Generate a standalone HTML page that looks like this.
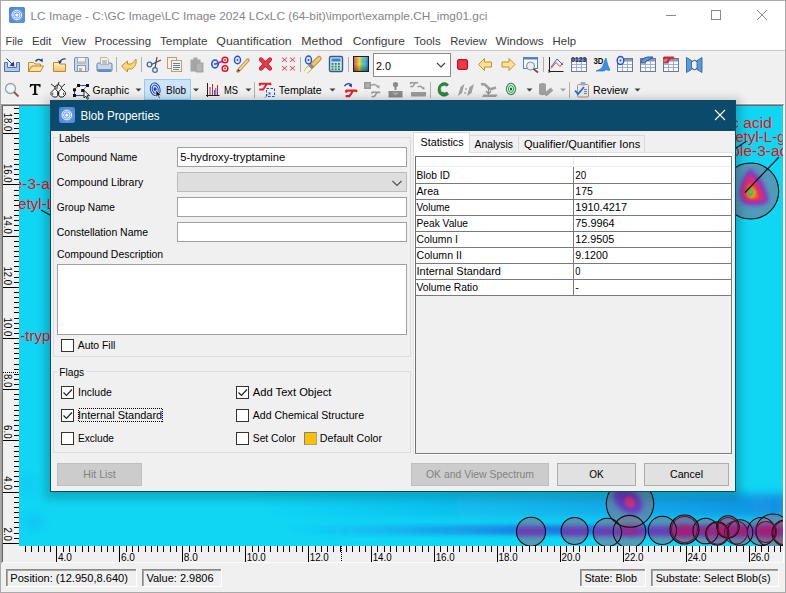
<!DOCTYPE html><html><head><meta charset="utf-8"><style>html,body{margin:0;padding:0;width:786px;height:593px;overflow:hidden;background:#f0f0f0}</style></head><body><svg width="786" height="593" viewBox="0 0 786 593" font-family='"Liberation Sans", sans-serif' style="position:absolute;left:0;top:0">
<defs>
<filter id="blur2" x="-50%" y="-50%" width="200%" height="200%"><feGaussianBlur stdDeviation="2"/></filter>
<filter id="blur4" x="-50%" y="-50%" width="200%" height="200%"><feGaussianBlur stdDeviation="4"/></filter>
<filter id="blur6" x="-50%" y="-50%" width="200%" height="200%"><feGaussianBlur stdDeviation="6"/></filter>
<filter id="shadow" x="-10%" y="-10%" width="120%" height="130%"><feGaussianBlur stdDeviation="5"/></filter>
<radialGradient id="appicon" cx="55%" cy="55%" r="65%"><stop offset="0" stop-color="#7aaaf0"/><stop offset="1" stop-color="#4a82d4"/></radialGradient>
<linearGradient id="spectrum" x1="0" x2="1" y1="0" y2="0">
<stop offset="0" stop-color="#d04a6a"/><stop offset="0.22" stop-color="#f09050"/><stop offset="0.4" stop-color="#f0e050"/><stop offset="0.58" stop-color="#70d070"/><stop offset="0.78" stop-color="#40b8f0"/><stop offset="1" stop-color="#3a50d0"/></linearGradient>
<linearGradient id="vdark" x1="0" x2="0" y1="0" y2="1"><stop offset="0" stop-color="#fff" stop-opacity="0.25"/><stop offset="0.5" stop-color="#000" stop-opacity="0"/><stop offset="1" stop-color="#000" stop-opacity="0.45"/></linearGradient>
<clipPath id="plotclip"><rect x="19" y="106" width="764" height="440"/></clipPath>
</defs>
<rect x="0" y="0" width="786" height="593" fill="#f0f0f0"/>
<rect x="0" y="0" width="786" height="50" fill="#ffffff"/>
<rect x="0.5" y="0.5" width="785" height="592" fill="none" stroke="#aaaaaa" stroke-width="1"/>
<line x1="1" y1="50.5" x2="785" y2="50.5" stroke="#c8c8c8" stroke-width="1"/>
<rect x="9" y="7" width="16" height="16" rx="2" fill="url(#appicon)"/>
<circle cx="16.8" cy="15" r="4.8" fill="none" stroke="#ffffff" stroke-width="1" opacity="0.9"/>
<circle cx="16.8" cy="15" r="3.2" fill="none" stroke="#ffffff" stroke-width="1" opacity="0.9"/>
<circle cx="16.8" cy="15" r="1.6" fill="#fff"/>
<text x="30.5" y="19.7" font-size="11.5" fill="#858585" textLength="457" lengthAdjust="spacingAndGlyphs">LC Image - C:\GC Image\LC Image 2024 LCxLC (64-bit)\import\example.CH_img01.gci</text>
<line x1="666" y1="15.5" x2="676" y2="15.5" stroke="#8a8a8a" stroke-width="1"/>
<rect x="711.5" y="10.5" width="9" height="9" fill="none" stroke="#8a8a8a" stroke-width="1"/>
<line x1="757" y1="10" x2="767" y2="20" stroke="#8a8a8a" stroke-width="1"/>
<line x1="767" y1="10" x2="757" y2="20" stroke="#8a8a8a" stroke-width="1"/>
<text x="5.5" y="44.9" font-size="11.3" fill="#3c3c3c" textLength="17.6" lengthAdjust="spacingAndGlyphs">File</text>
<text x="32" y="44.9" font-size="11.3" fill="#3c3c3c" textLength="19.5" lengthAdjust="spacingAndGlyphs">Edit</text>
<text x="61.5" y="44.9" font-size="11.3" fill="#3c3c3c" textLength="24.4" lengthAdjust="spacingAndGlyphs">View</text>
<text x="94.5" y="44.9" font-size="11.3" fill="#3c3c3c" textLength="56.5" lengthAdjust="spacingAndGlyphs">Processing</text>
<text x="160" y="44.9" font-size="11.3" fill="#3c3c3c" textLength="47.6" lengthAdjust="spacingAndGlyphs">Template</text>
<text x="216.3" y="44.9" font-size="11.3" fill="#3c3c3c" textLength="75.4" lengthAdjust="spacingAndGlyphs">Quantification</text>
<text x="301.2" y="44.9" font-size="11.3" fill="#3c3c3c" textLength="41.3" lengthAdjust="spacingAndGlyphs">Method</text>
<text x="352.7" y="44.9" font-size="11.3" fill="#3c3c3c" textLength="52.3" lengthAdjust="spacingAndGlyphs">Configure</text>
<text x="413.8" y="44.9" font-size="11.3" fill="#3c3c3c" textLength="26.9" lengthAdjust="spacingAndGlyphs">Tools</text>
<text x="450.2" y="44.9" font-size="11.3" fill="#3c3c3c" textLength="36.6" lengthAdjust="spacingAndGlyphs">Review</text>
<text x="495.4" y="44.9" font-size="11.3" fill="#3c3c3c" textLength="48.4" lengthAdjust="spacingAndGlyphs">Windows</text>
<text x="552.6" y="44.9" font-size="11.3" fill="#3c3c3c" textLength="23.4" lengthAdjust="spacingAndGlyphs">Help</text>
<path d="M4.5,62.5 h3 v5 h9 v-5 h3 v9 h-15 z" fill="#b4c8e6" stroke="#4f74ad" stroke-width="1"/>
<path d="M6.5,58.5 L12.5,64.5" stroke="#1f3f9f" stroke-width="1"/><path d="M14.5,66.5 l-5,-0.8 l4.2,-4.2 z" fill="#1f3f9f"/>
<linearGradient id="fold" x1="0" y1="0" x2="0" y2="1"><stop offset="0" stop-color="#fff0c8"/><stop offset="1" stop-color="#f0c468"/></linearGradient>
<path d="M28.5,62.5 h5 l1.5,1.5 h5.5 v7.5 h-12 z" fill="url(#fold)" stroke="#c08434"/>
<path d="M28.5,71.5 l3.5,-5.5 h11.5 l-3,5.5 z" fill="#fbe3a4" stroke="#c08434"/>
<path d="M35.5,61.5 q2.5,-3.5 5.5,-1" fill="none" stroke="#1f3f7f" stroke-width="1.3"/><path d="M42.8,62.2 l-0.3,-4 l-3,2.2z" fill="#1f3f7f"/>
<path d="M53.5,62.5 h5 l1.5,1.5 h5.5 v7.5 h-12 z" fill="url(#fold)" stroke="#c08434"/>
<path d="M59.5,62.5 q2,-4 6,-3.5" fill="none" stroke="#1f3f7f" stroke-width="1.3"/><path d="M58,60.5 l1.5,3.5 l2.5,-2.5z" fill="#1f3f7f"/>
<rect x="74.5" y="57.5" width="14" height="14" rx="1.2" fill="#c6d6ee" stroke="#6f8fc0" stroke-width="1"/>
<rect x="77.5" y="57.5" width="8" height="5.5" fill="#f4f4f0" stroke="#8aa4cc" stroke-width="0.8"/><path d="M77.5,62 h8" stroke="#e0b050" stroke-width="1"/><rect x="77.5" y="65.5" width="8" height="6" fill="#eef2f8" stroke="#6f8fc0" stroke-width="0.8"/><rect x="79" y="68" width="3" height="3" fill="#e8b040"/>
<rect x="97" y="63" width="15" height="8.5" rx="1.5" fill="#c8d6ee" stroke="#5b7fb5" stroke-width="1"/><rect x="98" y="69" width="13" height="2.5" fill="#6f8fc0"/>
<path d="M100.5,64.5 v-7 h6 l2,2 v5 z" fill="#f6f2e6" stroke="#b8a878" stroke-width="0.8"/>
<path d="M102,61 h5 M102,63 h5" stroke="#5b7fb5" stroke-width="0.8"/>
<line x1="116.5" y1="57" x2="116.5" y2="72" stroke="#b0b0b0" stroke-width="1"/>
<path d="M121.5,66 l6,-5 v3 h4 q3,-3 4.5,-5 q1,6 -3,9 l-1.5,1 h-4 v3 z" fill="#f9d77a" stroke="#c89020" stroke-width="1"/>
<line x1="141.5" y1="57" x2="141.5" y2="72" stroke="#b0b0b0" stroke-width="1"/>
<circle cx="149.5" cy="64.5" r="2.3" fill="none" stroke="#3f6fb0" stroke-width="1.3"/><circle cx="155" cy="70" r="2.3" fill="none" stroke="#3f6fb0" stroke-width="1.3"/>
<path d="M151.5,64.5 L161,60 M155,68 L157,57" stroke="#404858" stroke-width="1.2"/>
<rect x="167.5" y="57.5" width="9" height="11" fill="#f5f2e8" stroke="#b8a070"/><rect x="171.5" y="60.5" width="10" height="11" fill="#f7f4ea" stroke="#b8a070"/>
<path d="M173,63.5 h7 M173,65.5 h7 M173,67.5 h7 M173,69.5 h6" stroke="#4a6fb0" stroke-width="0.9"/>
<path d="M190.5,59.5 h3 v-2 h4 v2 h3 v12 h-10 z" fill="#a6a6a6"/><rect x="196" y="63" width="7" height="9" fill="#b4b4b4" stroke="#9a9a9a" stroke-width="0.8"/>
<ellipse cx="215" cy="64" rx="3.2" ry="4" fill="#dfe9ff" stroke="#1f4fdf" stroke-width="1.6"/><circle cx="215" cy="64" r="1" fill="#1f4fdf"/>
<path d="M216,64 L225,60" stroke="#8a2fb0" stroke-width="1.4"/>
<circle cx="225" cy="60" r="2.8" fill="#fff" stroke="#e0102a" stroke-width="1.5"/><circle cx="225" cy="68.5" r="2.8" fill="#fff" stroke="#e0102a" stroke-width="1.5"/><circle cx="225" cy="60" r="0.9" fill="#e0102a"/><circle cx="225" cy="68.5" r="0.9" fill="#e0102a"/>
<ellipse cx="237.5" cy="60" rx="3" ry="3.8" fill="#dfe9ff" stroke="#1f4fdf" stroke-width="1.4"/><circle cx="237.5" cy="60" r="0.9" fill="#1f4fdf"/>
<path d="M238,71 L248,60" stroke="#c89040" stroke-width="3.5" stroke-linecap="round"/><path d="M238,71 L248,60" stroke="#f4d9a0" stroke-width="1.8"/><path d="M237,72 l1.5,-3 l1.5,1.5z" fill="#2a3050"/>
<path d="M261,59.5 L270,68.5 M270,59.5 L261,68.5" stroke="#b01828" stroke-width="4.2" stroke-linecap="round"/><path d="M261,59.5 L270,68.5 M270,59.5 L261,68.5" stroke="#ea3a48" stroke-width="2.6" stroke-linecap="round"/>
<path d="M282,57.5 l5,4.5 m0,-4.5 l-5,4.5 M290,57.5 l5,4.5 m0,-4.5 l-5,4.5 M282,66 l5,4.5 m0,-4.5 l-5,4.5 M290,66 l5,4.5 m0,-4.5 l-5,4.5" stroke="#d82030" stroke-width="0.85"/>
<line x1="300.5" y1="57" x2="300.5" y2="72" stroke="#b0b0b0" stroke-width="1"/>
<path d="M307,70.5 L319,58.5" stroke="#a07830" stroke-width="5.2" stroke-linecap="round"/><path d="M307,70.5 L319,58.5" stroke="#f0c868" stroke-width="3.6" stroke-linecap="round"/>
<path d="M306.5,71 L310,67.5" stroke="#f8f4d8" stroke-width="4" stroke-linecap="round"/><path d="M310,67.5 L312.5,65" stroke="#8a8a8a" stroke-width="4.4"/>
<ellipse cx="308.5" cy="60" rx="3" ry="4" fill="#dfe9ff" stroke="#1f4fdf" stroke-width="1.4"/><circle cx="308.5" cy="60" r="1" fill="#1f4fdf"/>
<rect x="329.5" y="56.5" width="13" height="15" rx="1.5" fill="#cfe3f7" stroke="#2a5f90" stroke-width="1.4"/><rect x="331.5" y="58.5" width="9" height="3" fill="#3a7fd0"/>
<rect x="331.5" y="63.0" width="2" height="1.8" fill="#2a8a40"/>
<rect x="334.7" y="63.0" width="2" height="1.8" fill="#2a8a40"/>
<rect x="337.9" y="63.0" width="2" height="1.8" fill="#2a8a40"/>
<rect x="331.5" y="65.7" width="2" height="1.8" fill="#2a8a40"/>
<rect x="334.7" y="65.7" width="2" height="1.8" fill="#2a8a40"/>
<rect x="337.9" y="65.7" width="2" height="1.8" fill="#2a8a40"/>
<rect x="331.5" y="68.4" width="2" height="1.8" fill="#2a8a40"/>
<rect x="334.7" y="68.4" width="2" height="1.8" fill="#2a8a40"/>
<rect x="337.9" y="68.4" width="2" height="1.8" fill="#2a8a40"/>
<line x1="348.5" y1="57" x2="348.5" y2="72" stroke="#b0b0b0" stroke-width="1"/>
<rect x="353" y="56" width="16" height="16" fill="url(#spectrum)"/><rect x="353" y="56" width="16" height="16" fill="url(#vdark)"/><rect x="353.5" y="56.5" width="15" height="15" fill="none" stroke="#202020"/>
<rect x="373.5" y="53.5" width="77" height="23" fill="#ffffff" stroke="#8a8a8a" stroke-width="1"/>
<text x="376" y="69.5" font-size="11.5" fill="#000" textLength="15" lengthAdjust="spacingAndGlyphs">2.0</text>
<path d="M437,63 l4,4 l4,-4" fill="none" stroke="#404040" stroke-width="1.1"/>
<rect x="457.5" y="59.5" width="10" height="10" rx="1.5" fill="#e8283a" stroke="#c01828"/><rect x="459" y="61" width="7" height="7" fill="#ee3a48"/>
<path d="M478.5,64.5 l6,-6 v3.5 h7 v5 h-7 v3.5 z" fill="#fbe29a" stroke="#c89020"/>
<path d="M515,64.5 l-6,-6 v3.5 h-7 v5 h7 v3.5 z" fill="#fbe29a" stroke="#c89020"/>
<rect x="523.5" y="57.5" width="14" height="11" fill="#f4f8ff" stroke="#5a82b8"/><rect x="523.5" y="57.5" width="14" height="2" fill="#5a82b8"/>
<circle cx="530.5" cy="66" r="4" fill="#e8eef4" stroke="#808a98" stroke-width="1"/><path d="M533.5,69 L538,72.5" stroke="#7a4a3a" stroke-width="1.6"/>
<line x1="543.5" y1="57" x2="543.5" y2="72" stroke="#b0b0b0" stroke-width="1"/>
<path d="M549.5,57 v14.5 h14" fill="none" stroke="#202020" stroke-width="1"/><path d="M548,70 l3,2 M548,72 h2" stroke="#202020" stroke-width="0.8"/>
<path d="M551,68.5 l5,-6 l4,4 l3,-4" fill="none" stroke="#e02a2a" stroke-width="0.9"/><path d="M551,67 l6,-8 l6,6" fill="none" stroke="#3050d0" stroke-width="0.9"/>
<rect x="571.5" y="58.5" width="15" height="13" fill="#f6f8fc" stroke="#6a7898"/>
<rect x="572" y="59" width="14" height="2.5" fill="#8a98b8"/>
<path d="M572,64.5 h14 M572,67.5 h14 M576.5,61 v10 M581.5,61 v10" stroke="#9aa8c0" stroke-width="0.9"/>
<text x="571.3" y="62" font-size="7" fill="#1a2a5a" font-weight="bold" textLength="15" lengthAdjust="spacingAndGlyphs">0123</text>
<text x="593.5" y="63.5" font-size="8.5" fill="#101010" font-weight="bold" textLength="10" lengthAdjust="spacingAndGlyphs">3D</text>
<path d="M596,71 q5,-1 7,-5 q1.5,-6 3,-8 q1.5,8 4,12 q-1,1 -4,-0.5 q-1,1.5 -3,1.5 z" fill="#3a90e0" stroke="#1a60b0" stroke-width="0.6"/><path d="M600,66 q3,-1 4,-4" stroke="#a0d0ff" stroke-width="0.8" fill="none"/>
<rect x="617.5" y="58.5" width="15" height="13" fill="#f6f8fc" stroke="#6a7898"/>
<rect x="618" y="59" width="14" height="2.5" fill="#8a98b8"/>
<path d="M618,64.5 h14 M618,67.5 h14 M622.5,61 v10 M627.5,61 v10" stroke="#9aa8c0" stroke-width="0.9"/>
<ellipse cx="620.5" cy="60.5" rx="3.3" ry="4" fill="#dfe9ff" stroke="#1f4fdf" stroke-width="1.4"/><circle cx="620.5" cy="60.5" r="1" fill="#1f4fdf"/>
<rect x="640.5" y="58.5" width="15" height="13" fill="#f6f8fc" stroke="#6a7898"/>
<rect x="641" y="59" width="14" height="2.5" fill="#8a98b8"/>
<path d="M641,64.5 h14 M641,67.5 h14 M645.5,61 v10 M650.5,61 v10" stroke="#9aa8c0" stroke-width="0.9"/>
<path d="M641,63 q0,-5 7,-6 h5 l-4,3 q-3,0 -4,3 z" fill="#6a92d0" stroke="#1f4f9f" stroke-width="0.9"/>
<rect x="663.5" y="58.5" width="15" height="13" fill="#f6f8fc" stroke="#6a7898"/>
<rect x="664" y="59" width="14" height="2.5" fill="#8a98b8"/>
<path d="M664,64.5 h14 M664,67.5 h14 M668.5,61 v10 M673.5,61 v10" stroke="#9aa8c0" stroke-width="0.9"/>
<g transform="translate(663.5,56.5) scale(0.85)"><path d="M0.5,1.2 h11 M0.8,0.5 v2.8 M10.5,0.3 l1.5,2.2 M8,1.3 l-4.2,6.2 M0.2,7 h4.3" fill="none" stroke="#e0202a" stroke-width="2.4"/></g>
<path d="M686.5,57.5 l5,3 v9 l-5,3 z M702,57.5 l-5,3 v9 l5,3 z" fill="#5a9ad8" stroke="#1f5fa0" stroke-width="0.8"/>
<path d="M692,61.5 q2.5,-2.5 5,0 M692,68.5 q2.5,2.5 5,0" fill="none" stroke="#1a2a6a" stroke-width="0.9"/>
<circle cx="10.5" cy="88.5" r="5" fill="#f0f4f8" stroke="#9aa0a8" stroke-width="1.3"/><path d="M14,92 L18.5,96.5" stroke="#8a5a4a" stroke-width="2"/>
<path d="M30,84 h10.5 v3.2 h-0.8 q-0.5,-1.8 -2.2,-1.8 h-1.3 v8.2 l1.6,0.5 v0.9 h-5.4 v-0.9 l1.6,-0.5 v-8.2 h-1.3 q-1.7,0 -2.2,1.8 h-0.8 z" fill="#111"/>
<path d="M51,84 l4,3 v2 M57,84.5 l-2,2.5 M58,84 l3.5,3 v2 M65,84 l-3.5,3 M59,82 l-2,5 v2" fill="none" stroke="#111" stroke-width="0.9"/>
<path d="M55,88.5 l-4,4 v2 l2.5,2.5 h3 l1.5,-2 v-3 z M61.5,88.5 l4,4 v2 l-2.5,2.5 h-3 l-1.5,-2 v-3 z" fill="#fff" stroke="#111" stroke-width="0.9"/>
<path d="M52.8,92.5 v2.5 M63.7,92.5 v2.5" stroke="#111" stroke-width="0.8"/><rect x="57.3" y="92.5" width="2" height="2" fill="#111"/>
<path d="M78.5,85.5 h9 M74.5,89.5 v6 h9.5" fill="none" stroke="#2050c0" stroke-width="1"/>
<path d="M74.5,89.5 l4,-4 M87.5,85.5 l-5,5" fill="none" stroke="#2050c0" stroke-width="1" stroke-dasharray="1 1"/>
<rect x="77" y="84" width="3" height="3" fill="#111"/>
<rect x="86" y="84" width="3" height="3" fill="#111"/>
<rect x="73" y="88.3" width="3" height="3" fill="#111"/>
<rect x="81.2" y="89" width="3" height="3" fill="#111"/>
<rect x="73" y="94" width="3" height="3" fill="#111"/>
<path d="M84,90.5 v7.5 l1.8,-1.8 l1.5,3 l1.2,-0.6 l-1.5,-2.9 h2.6 z" fill="#fff" stroke="#111" stroke-width="0.9"/>
<text x="92.6" y="93.8" font-size="11.3" fill="#000" textLength="36.5" lengthAdjust="spacingAndGlyphs">Graphic</text>
<path d="M135.5,88.5 h6 l-3,3 z" fill="#404040"/>
<rect x="144.5" y="79.5" width="46" height="20" fill="#cce4f7" stroke="#99c9ef" stroke-width="1"/>
<g transform="rotate(-15 155.2 89.3)"><ellipse cx="155.2" cy="89.3" rx="4.8" ry="6.4" fill="none" stroke="#1f3fd0" stroke-width="1"/><ellipse cx="155.2" cy="89.3" rx="3" ry="4.2" fill="none" stroke="#1f3fd0" stroke-width="0.9"/><ellipse cx="155.2" cy="89.3" rx="1.5" ry="2" fill="#1f3fd0"/></g>
<path d="M156,90 v7.2 l1.7,-1.6 l1.5,3 l1.1,-0.5 l-1.5,-2.9 h2.4 z" fill="#111" stroke="#fff" stroke-width="0.6"/>
<text x="166" y="93.8" font-size="11.3" fill="#000" textLength="20" lengthAdjust="spacingAndGlyphs">Blob</text>
<path d="M193,88.5 h6 l-3,3 z" fill="#404040"/>
<path d="M207.5,83 v14 M206,95.5 h13.5" fill="none" stroke="#202020"/><path d="M210,95 v-8 M212.5,95 v-11 M217.5,95 v-10" stroke="#d82030" stroke-width="1"/><path d="M214.5,95 v-5 M215.8,95 v-7" stroke="#2050d0" stroke-width="0.9"/>
<text x="224" y="93.8" font-size="11.3" fill="#000" textLength="14" lengthAdjust="spacingAndGlyphs">MS</text>
<path d="M245.5,88.5 h6 l-3,3 z" fill="#404040"/>
<line x1="254.5" y1="82" x2="254.5" y2="98" stroke="#b0b0b0" stroke-width="1"/>
<g transform="translate(259,82.5) scale(1.0)"><path d="M0.5,1.2 h11 M0.8,0.5 v2.8 M10.5,0.3 l1.5,2.2 M8,1.3 l-4.2,6.2 M0.2,7 h4.3" fill="none" stroke="#e0202a" stroke-width="2.0"/></g>
<rect x="266.5" y="88.5" width="8" height="8" fill="none" stroke="#2050c0" stroke-width="1" stroke-dasharray="2.5 1.5"/>
<path d="M265,97.5 l4,-4" stroke="#2050c0" stroke-width="1" stroke-dasharray="1 1"/><path d="M268,92.5 l2.5,0 l-0.2,2.8 z" fill="#2050c0"/>
<text x="278.7" y="93.8" font-size="11.3" fill="#000" textLength="43" lengthAdjust="spacingAndGlyphs">Template</text>
<path d="M329.5,88.5 h6 l-3,3 z" fill="#404040"/>
<path d="M344.5,86 q3,-4 7,-1" fill="none" stroke="#1f3f9f" stroke-width="1.3"/><path d="M352,87.5 l-0.5,-4 l-3,2z" fill="#1f3f9f"/>
<g transform="translate(345.5,89.5) scale(0.95)"><path d="M0.5,1.2 h11 M0.8,0.5 v2.8 M10.5,0.3 l1.5,2.2 M8,1.3 l-4.2,6.2 M0.2,7 h4.3" fill="none" stroke="#e0202a" stroke-width="2.2"/></g>
<rect x="364" y="82" width="7" height="7" fill="#9a9a9a"/><rect x="365.5" y="83.5" width="4" height="4" fill="#b0b0b0"/>
<path d="M371,85.5 q4,-2.5 7,1.5" fill="none" stroke="#9a9a9a" stroke-width="1.3"/><path d="M379.5,88.5 l-0.3,-3.5 l-2.8,1.8z" fill="#9a9a9a"/>
<g transform="translate(371.5,91.5) scale(0.7)"><path d="M0.5,1.2 h11 M0.8,0.5 v2.8 M10.5,0.3 l1.5,2.2 M8,1.3 l-4.2,6.2 M0.2,7 h4.3" fill="none" stroke="#9a9a9a" stroke-width="2.2"/></g>
<circle cx="395.5" cy="84.5" r="2.6" fill="#8a8a8a"/><path d="M394.5,86 h2 v4 h-2 z" fill="#8a8a8a"/><path d="M388.5,91 h14 v6.5 h-14 z" fill="#8a8a8a"/><path d="M392,92.5 h7 l-3.5,3 z" fill="#b0b0b0"/>
<g transform="translate(410,82) scale(0.65)"><path d="M0.5,1.2 h11 M0.8,0.5 v2.8 M10.5,0.3 l1.5,2.2 M8,1.3 l-4.2,6.2 M0.2,7 h4.3" fill="none" stroke="#9a9a9a" stroke-width="2.2"/></g>
<path d="M417.5,87 q3,-2 5.5,1.2" fill="none" stroke="#9a9a9a" stroke-width="1.3"/><path d="M424.5,90 l-0.3,-3.2 l-2.6,1.6z" fill="#9a9a9a"/>
<rect x="411" y="92" width="15" height="4.5" fill="#9a9a9a"/>
<line x1="430.5" y1="82" x2="430.5" y2="98" stroke="#b0b0b0" stroke-width="1"/>
<path d="M448.5,84.5 q-3,-3 -6.5,-1.5 q-4,2 -4,6.5 q0,5 4.5,6.5 q3,1 6,-1.5 l-1.5,-2.5 q-2,1.5 -4,0.5 q-2.5,-1.5 -2.3,-3.5 q0,-2.5 2.3,-3.5 q2,-0.8 3.8,0.8 z" fill="#2a8a3a" stroke="#1a6a2a" stroke-width="0.6"/><path d="M441.5,86.5 q-1,3 0.5,5.5" stroke="#c8f0c8" stroke-width="0.9" fill="none"/>
<path d="M458,96 l2.5,-9 l4,-3 l-2.5,9 z M467,96 l2.5,-9 l4.5,-3 l-2.5,9 z" fill="#a0a0a0"/><path d="M465,88 l2,2 M467,88 l-2,2 M464,92 l2,2 M466,92 l-2,2" stroke="#a0a0a0" stroke-width="0.7"/>
<path d="M481,84.5 q3,-1 5,1 l3,3 q2,1 4,0 l3,-1" stroke="#a0a0a0" stroke-width="2.6" fill="none"/><path d="M488.5,88 v5 M486,91 l2.5,3 l2.5,-3" stroke="#909090" stroke-width="1.2" fill="none"/><path d="M482,97 l1.5,-2.5 h14 l-1.5,2.5 z" fill="#a0a0a0"/>
<ellipse cx="511" cy="89" rx="4.6" ry="5.6" fill="none" stroke="#2a9a4a" stroke-width="1.2"/><ellipse cx="511" cy="89" rx="2.6" ry="3.4" fill="none" stroke="#2a9a4a" stroke-width="1"/><ellipse cx="511" cy="89" rx="1.2" ry="1.6" fill="#1a6a2a"/>
<path d="M526.5,88.5 h6 l-3,3 z" fill="#404040"/>
<path d="M539,84 q3.5,-2 7,0 v10 q-3.5,2.5 -7,0 z" fill="#a0a0a0"/><path d="M545,95 l7,-6" stroke="#a0a0a0" stroke-width="4"/>
<path d="M560,88.5 h6 l-3,3 z" fill="#a0a0a0"/>
<line x1="569.5" y1="82" x2="569.5" y2="98" stroke="#b0b0b0" stroke-width="1"/>
<rect x="577.5" y="84.5" width="11" height="12.5" rx="1" fill="#e6ecf6" stroke="#b89060" stroke-width="1"/><rect x="580.5" y="82" width="5" height="3.5" rx="1" fill="#a0a8b8"/>
<path d="M584,89.5 h3 M584,91.5 h3 M584,93.5 h3" stroke="#5a6070" stroke-width="0.8"/><path d="M575,90.5 l3,3.5 l6,-7" fill="none" stroke="#1f6fd8" stroke-width="1.8"/>
<text x="593" y="93.8" font-size="11.3" fill="#000" textLength="35" lengthAdjust="spacingAndGlyphs">Review</text>
<path d="M634.5,88.5 h6 l-3,3 z" fill="#404040"/>
<rect x="2" y="105" width="781" height="458" fill="#f0f0f0"/>
<line x1="1" y1="103.5" x2="785" y2="103.5" stroke="#f8f8f8" stroke-width="1"/>
<line x1="1" y1="104.5" x2="784" y2="104.5" stroke="#a0a0a0" stroke-width="1"/>
<line x1="2" y1="105.5" x2="783" y2="105.5" stroke="#696969" stroke-width="1"/>
<line x1="0.5" y1="50" x2="0.5" y2="593" stroke="#aaaaaa" stroke-width="1"/>
<line x1="1.5" y1="104" x2="1.5" y2="563" stroke="#a0a0a0" stroke-width="1"/>
<line x1="2.5" y1="105" x2="2.5" y2="562" stroke="#696969" stroke-width="1"/>
<line x1="783.5" y1="106" x2="783.5" y2="563" stroke="#ffffff" stroke-width="1"/>
<line x1="3" y1="562.5" x2="784" y2="562.5" stroke="#fafafa" stroke-width="1"/>
<g clip-path="url(#plotclip)">
<rect x="19" y="106" width="764" height="440" fill="#10d6f4"/>
<filter id="blur1" x="-50%" y="-50%" width="200%" height="200%"><feGaussianBlur stdDeviation="1.3"/></filter>
<ellipse cx="34" cy="522" rx="10" ry="8" fill="#0cb4f0" opacity="0.45" filter="url(#blur4)"/>
<ellipse cx="28" cy="485" rx="8" ry="10" fill="#0cbcf0" opacity="0.4" filter="url(#blur4)"/>
<linearGradient id="upg" x1="0" x2="1"><stop offset="0" stop-color="#0fa8e8" stop-opacity="0"/><stop offset="0.4" stop-color="#0fa0e8" stop-opacity="0.45"/><stop offset="1" stop-color="#1488e0" stop-opacity="0.9"/></linearGradient>
<rect x="250" y="494" width="540" height="24" fill="url(#upg)" filter="url(#blur4)"/>
<linearGradient id="bandg" x1="0" x2="1"><stop offset="0" stop-color="#1a8ef0" stop-opacity="0"/><stop offset="0.25" stop-color="#1a78e8" stop-opacity="0.4"/><stop offset="0.5" stop-color="#1f64e0" stop-opacity="0.8"/><stop offset="1" stop-color="#2a54dc" stop-opacity="0.95"/></linearGradient>
<rect x="280" y="525" width="510" height="10" fill="url(#bandg)" filter="url(#blur2)"/>
<clipPath id="circclip"><circle cx="750.7" cy="191" r="28"/><circle cx="630" cy="503.6" r="23.7"/><circle cx="531" cy="531.7" r="14.5"/><circle cx="574.6" cy="531" r="13.5"/><circle cx="607.4" cy="532.4" r="14.2"/><circle cx="629.5" cy="531.7" r="16.3"/><circle cx="662.4" cy="530.4" r="14.1"/><circle cx="684.5" cy="529.5" r="14.5"/><circle cx="705.7" cy="531" r="12.8"/><circle cx="717.3" cy="533.5" r="11.6"/><circle cx="728" cy="527" r="11.2"/><circle cx="740" cy="532.5" r="12.8"/><circle cx="761.4" cy="531.5" r="14"/><circle cx="773" cy="531" r="17"/><circle cx="785" cy="533" r="13"/></clipPath>
<circle cx="750.7" cy="191" r="28" fill="#7c7590" fill-opacity="0.6"/>
<circle cx="630" cy="503.6" r="23.7" fill="#7c7590" fill-opacity="0.6"/>
<circle cx="531" cy="531.7" r="14.5" fill="#7c7590" fill-opacity="0.6"/>
<circle cx="574.6" cy="531" r="13.5" fill="#7c7590" fill-opacity="0.6"/>
<circle cx="607.4" cy="532.4" r="14.2" fill="#7c7590" fill-opacity="0.6"/>
<circle cx="629.5" cy="531.7" r="16.3" fill="#7c7590" fill-opacity="0.6"/>
<circle cx="662.4" cy="530.4" r="14.1" fill="#7c7590" fill-opacity="0.6"/>
<circle cx="684.5" cy="529.5" r="14.5" fill="#7c7590" fill-opacity="0.6"/>
<circle cx="705.7" cy="531" r="12.8" fill="#7c7590" fill-opacity="0.6"/>
<circle cx="717.3" cy="533.5" r="11.6" fill="#7c7590" fill-opacity="0.6"/>
<circle cx="728" cy="527" r="11.2" fill="#7c7590" fill-opacity="0.6"/>
<circle cx="740" cy="532.5" r="12.8" fill="#7c7590" fill-opacity="0.6"/>
<circle cx="761.4" cy="531.5" r="14" fill="#7c7590" fill-opacity="0.6"/>
<circle cx="773" cy="531" r="17" fill="#7c7590" fill-opacity="0.6"/>
<circle cx="785" cy="533" r="13" fill="#7c7590" fill-opacity="0.6"/>
<g clip-path="url(#circclip)">
<rect x="510" y="527" width="280" height="9" fill="#6a34b8" opacity="0.85" filter="url(#blur2)"/>
<ellipse cx="630" cy="531" rx="10" ry="5.5" fill="#aa1f78" opacity="0.55" filter="url(#blur2)"/>
<ellipse cx="684" cy="531" rx="13" ry="5.5" fill="#aa1f78" opacity="0.9" filter="url(#blur2)"/>
<ellipse cx="705" cy="531" rx="8" ry="5.5" fill="#aa1f78" opacity="0.6" filter="url(#blur2)"/>
<ellipse cx="722" cy="531" rx="10" ry="5.5" fill="#aa1f78" opacity="0.9" filter="url(#blur2)"/>
<ellipse cx="740" cy="531" rx="9" ry="5.5" fill="#aa1f78" opacity="0.8" filter="url(#blur2)"/>
<ellipse cx="768" cy="531" rx="12" ry="5.5" fill="#aa1f78" opacity="0.95" filter="url(#blur2)"/>
<circle cx="684.5" cy="529.5" r="13" fill="#a02070" fill-opacity="0.25"/>
<circle cx="717.3" cy="533.5" r="10.8" fill="#a02070" fill-opacity="0.25"/>
<circle cx="728" cy="527.5" r="10" fill="#a02070" fill-opacity="0.25"/>
<circle cx="736" cy="532.5" r="11.5" fill="#a02070" fill-opacity="0.25"/>
<circle cx="766" cy="532" r="10.5" fill="#a02070" fill-opacity="0.25"/>
<circle cx="785" cy="533" r="12" fill="#a02070" fill-opacity="0.25"/>
</g>
<ellipse cx="628" cy="501" rx="16" ry="11" fill="#6a34c0" opacity="0.9" filter="url(#blur2)" transform="rotate(35 628 501)"/>
<ellipse cx="630" cy="502" rx="5" ry="6" fill="#d03080" opacity="0.95" filter="url(#blur1)" transform="rotate(-30 630 502)"/>
<path d="M750,168 Q766,180 769,202 Q758,208 744,204 Q738,200 740,188 Q742,176 750,168 Z" fill="#8a32c4" opacity="0.95" filter="url(#blur2)"/>
<path d="M750,174 Q762,184 765,200 Q756,204 746,201 Q741,197 742,189 Q744,180 750,174 Z" fill="#d82c78" filter="url(#blur1)"/>
<path d="M750,183 Q758,188 759,198 Q753,200 748,198 Q745,195 746,190 Q747,186 750,183 Z" fill="#e8602a" filter="url(#blur1)"/>
<ellipse cx="751.5" cy="193" rx="4" ry="5" fill="#e0b020" filter="url(#blur1)"/>
<ellipse cx="750.5" cy="192.5" rx="2.6" ry="4" fill="#40b030" filter="url(#blur1)"/>
<ellipse cx="750.5" cy="192" rx="1" ry="2" fill="#60b8d0"/>
<circle cx="750.7" cy="191" r="28" fill="none" stroke="#101010" stroke-width="1.1"/>
<circle cx="630" cy="503.6" r="23.7" fill="none" stroke="#101010" stroke-width="1.1"/>
<circle cx="531" cy="531.7" r="14.5" fill="none" stroke="#101010" stroke-width="1.1"/>
<circle cx="574.6" cy="531" r="13.5" fill="none" stroke="#101010" stroke-width="1.1"/>
<circle cx="607.4" cy="532.4" r="14.2" fill="none" stroke="#101010" stroke-width="1.1"/>
<circle cx="629.5" cy="531.7" r="16.3" fill="none" stroke="#101010" stroke-width="1.1"/>
<circle cx="662.4" cy="530.4" r="14.1" fill="none" stroke="#101010" stroke-width="1.1"/>
<circle cx="684.5" cy="529.5" r="14.5" fill="none" stroke="#101010" stroke-width="1.1"/>
<circle cx="705.7" cy="531" r="12.8" fill="none" stroke="#101010" stroke-width="1.1"/>
<circle cx="717.3" cy="533.5" r="11.6" fill="none" stroke="#101010" stroke-width="1.1"/>
<circle cx="728" cy="527" r="11.2" fill="none" stroke="#101010" stroke-width="1.1"/>
<circle cx="740" cy="532.5" r="12.8" fill="none" stroke="#101010" stroke-width="1.1"/>
<circle cx="761.4" cy="531.5" r="14" fill="none" stroke="#101010" stroke-width="1.1"/>
<circle cx="773" cy="531" r="17" fill="none" stroke="#101010" stroke-width="1.1"/>
<circle cx="785" cy="533" r="13" fill="none" stroke="#101010" stroke-width="1.1"/>
<circle cx="684.5" cy="529.5" r="13" fill="none" stroke="#6a1028" stroke-width="1.1"/>
<circle cx="717.3" cy="533.5" r="10.8" fill="none" stroke="#6a1028" stroke-width="1.1"/>
<circle cx="728" cy="527.5" r="10" fill="none" stroke="#6a1028" stroke-width="1.1"/>
<circle cx="736" cy="532.5" r="11.5" fill="none" stroke="#6a1028" stroke-width="1.1"/>
<circle cx="766" cy="532" r="10.5" fill="none" stroke="#6a1028" stroke-width="1.1"/>
<circle cx="785" cy="533" r="12" fill="none" stroke="#6a1028" stroke-width="1.1"/>
<text x="731.3" y="127.6" font-size="15.5" fill="#fa0a0a">c acid</text>
<text x="735.5" y="141.5" font-size="15" fill="#fa0a0a">etyl-L-g</text>
<text x="731.4" y="156.3" font-size="15.5" fill="#fa0a0a">ole-3-ac</text>
<line x1="745" y1="192.5" x2="779" y2="157" stroke="#101010" stroke-width="1.2"/>
<line x1="736" y1="148" x2="746" y2="141.5" stroke="#101010" stroke-width="1.1"/>
<text x="13.6" y="188.7" font-size="15.5" fill="#fa0a0a">e-3-a</text>
<text x="18.3" y="209.3" font-size="15" fill="#fa0a0a">etyl-L</text>
<line x1="41" y1="210" x2="50" y2="215" stroke="#101010" stroke-width="1.1"/>
<text x="16.1" y="340.7" font-size="15" fill="#fa0a0a">.-tryp</text>
</g>
<rect x="3" y="106" width="16" height="440" fill="#f0f0f0"/>
<rect x="3" y="546" width="780" height="16" fill="#f0f0f0"/>
<line x1="14" y1="108.5" x2="19" y2="108.5" stroke="#000" stroke-width="1"/>
<line x1="14" y1="113.5" x2="19" y2="113.5" stroke="#000" stroke-width="1"/>
<line x1="14" y1="118.5" x2="19" y2="118.5" stroke="#000" stroke-width="1"/>
<line x1="14" y1="123.5" x2="19" y2="123.5" stroke="#000" stroke-width="1"/>
<line x1="14" y1="128.5" x2="19" y2="128.5" stroke="#000" stroke-width="1"/>
<line x1="3" y1="133.5" x2="19" y2="133.5" stroke="#000" stroke-width="1"/>
<line x1="14" y1="138.5" x2="19" y2="138.5" stroke="#000" stroke-width="1"/>
<line x1="14" y1="143.5" x2="19" y2="143.5" stroke="#000" stroke-width="1"/>
<line x1="14" y1="149.5" x2="19" y2="149.5" stroke="#000" stroke-width="1"/>
<line x1="14" y1="154.5" x2="19" y2="154.5" stroke="#000" stroke-width="1"/>
<line x1="14" y1="159.5" x2="19" y2="159.5" stroke="#000" stroke-width="1"/>
<line x1="14" y1="164.5" x2="19" y2="164.5" stroke="#000" stroke-width="1"/>
<line x1="14" y1="169.5" x2="19" y2="169.5" stroke="#000" stroke-width="1"/>
<line x1="14" y1="174.5" x2="19" y2="174.5" stroke="#000" stroke-width="1"/>
<line x1="14" y1="179.5" x2="19" y2="179.5" stroke="#000" stroke-width="1"/>
<line x1="3" y1="184.5" x2="19" y2="184.5" stroke="#000" stroke-width="1"/>
<line x1="14" y1="190.5" x2="19" y2="190.5" stroke="#000" stroke-width="1"/>
<line x1="14" y1="195.5" x2="19" y2="195.5" stroke="#000" stroke-width="1"/>
<line x1="14" y1="200.5" x2="19" y2="200.5" stroke="#000" stroke-width="1"/>
<line x1="14" y1="205.5" x2="19" y2="205.5" stroke="#000" stroke-width="1"/>
<line x1="14" y1="210.5" x2="19" y2="210.5" stroke="#000" stroke-width="1"/>
<line x1="14" y1="215.5" x2="19" y2="215.5" stroke="#000" stroke-width="1"/>
<line x1="14" y1="220.5" x2="19" y2="220.5" stroke="#000" stroke-width="1"/>
<line x1="14" y1="225.5" x2="19" y2="225.5" stroke="#000" stroke-width="1"/>
<line x1="14" y1="230.5" x2="19" y2="230.5" stroke="#000" stroke-width="1"/>
<line x1="3" y1="236.5" x2="19" y2="236.5" stroke="#000" stroke-width="1"/>
<line x1="14" y1="241.5" x2="19" y2="241.5" stroke="#000" stroke-width="1"/>
<line x1="14" y1="246.5" x2="19" y2="246.5" stroke="#000" stroke-width="1"/>
<line x1="14" y1="251.5" x2="19" y2="251.5" stroke="#000" stroke-width="1"/>
<line x1="14" y1="256.5" x2="19" y2="256.5" stroke="#000" stroke-width="1"/>
<line x1="14" y1="261.5" x2="19" y2="261.5" stroke="#000" stroke-width="1"/>
<line x1="14" y1="266.5" x2="19" y2="266.5" stroke="#000" stroke-width="1"/>
<line x1="14" y1="271.5" x2="19" y2="271.5" stroke="#000" stroke-width="1"/>
<line x1="14" y1="277.5" x2="19" y2="277.5" stroke="#000" stroke-width="1"/>
<line x1="14" y1="282.5" x2="19" y2="282.5" stroke="#000" stroke-width="1"/>
<line x1="3" y1="287.5" x2="19" y2="287.5" stroke="#000" stroke-width="1"/>
<line x1="14" y1="292.5" x2="19" y2="292.5" stroke="#000" stroke-width="1"/>
<line x1="14" y1="297.5" x2="19" y2="297.5" stroke="#000" stroke-width="1"/>
<line x1="14" y1="302.5" x2="19" y2="302.5" stroke="#000" stroke-width="1"/>
<line x1="14" y1="307.5" x2="19" y2="307.5" stroke="#000" stroke-width="1"/>
<line x1="14" y1="312.5" x2="19" y2="312.5" stroke="#000" stroke-width="1"/>
<line x1="14" y1="318.5" x2="19" y2="318.5" stroke="#000" stroke-width="1"/>
<line x1="14" y1="323.5" x2="19" y2="323.5" stroke="#000" stroke-width="1"/>
<line x1="14" y1="328.5" x2="19" y2="328.5" stroke="#000" stroke-width="1"/>
<line x1="14" y1="333.5" x2="19" y2="333.5" stroke="#000" stroke-width="1"/>
<line x1="3" y1="338.5" x2="19" y2="338.5" stroke="#000" stroke-width="1"/>
<line x1="14" y1="343.5" x2="19" y2="343.5" stroke="#000" stroke-width="1"/>
<line x1="14" y1="348.5" x2="19" y2="348.5" stroke="#000" stroke-width="1"/>
<line x1="14" y1="353.5" x2="19" y2="353.5" stroke="#000" stroke-width="1"/>
<line x1="14" y1="358.5" x2="19" y2="358.5" stroke="#000" stroke-width="1"/>
<line x1="14" y1="364.5" x2="19" y2="364.5" stroke="#000" stroke-width="1"/>
<line x1="14" y1="369.5" x2="19" y2="369.5" stroke="#000" stroke-width="1"/>
<line x1="14" y1="374.5" x2="19" y2="374.5" stroke="#000" stroke-width="1"/>
<line x1="14" y1="379.5" x2="19" y2="379.5" stroke="#000" stroke-width="1"/>
<line x1="14" y1="384.5" x2="19" y2="384.5" stroke="#000" stroke-width="1"/>
<line x1="3" y1="389.5" x2="19" y2="389.5" stroke="#000" stroke-width="1"/>
<line x1="14" y1="394.5" x2="19" y2="394.5" stroke="#000" stroke-width="1"/>
<line x1="14" y1="399.5" x2="19" y2="399.5" stroke="#000" stroke-width="1"/>
<line x1="14" y1="405.5" x2="19" y2="405.5" stroke="#000" stroke-width="1"/>
<line x1="14" y1="410.5" x2="19" y2="410.5" stroke="#000" stroke-width="1"/>
<line x1="14" y1="415.5" x2="19" y2="415.5" stroke="#000" stroke-width="1"/>
<line x1="14" y1="420.5" x2="19" y2="420.5" stroke="#000" stroke-width="1"/>
<line x1="14" y1="425.5" x2="19" y2="425.5" stroke="#000" stroke-width="1"/>
<line x1="14" y1="430.5" x2="19" y2="430.5" stroke="#000" stroke-width="1"/>
<line x1="14" y1="435.5" x2="19" y2="435.5" stroke="#000" stroke-width="1"/>
<line x1="3" y1="440.5" x2="19" y2="440.5" stroke="#000" stroke-width="1"/>
<line x1="14" y1="446.5" x2="19" y2="446.5" stroke="#000" stroke-width="1"/>
<line x1="14" y1="451.5" x2="19" y2="451.5" stroke="#000" stroke-width="1"/>
<line x1="14" y1="456.5" x2="19" y2="456.5" stroke="#000" stroke-width="1"/>
<line x1="14" y1="461.5" x2="19" y2="461.5" stroke="#000" stroke-width="1"/>
<line x1="14" y1="466.5" x2="19" y2="466.5" stroke="#000" stroke-width="1"/>
<line x1="14" y1="471.5" x2="19" y2="471.5" stroke="#000" stroke-width="1"/>
<line x1="14" y1="476.5" x2="19" y2="476.5" stroke="#000" stroke-width="1"/>
<line x1="14" y1="481.5" x2="19" y2="481.5" stroke="#000" stroke-width="1"/>
<line x1="14" y1="486.5" x2="19" y2="486.5" stroke="#000" stroke-width="1"/>
<line x1="3" y1="492.5" x2="19" y2="492.5" stroke="#000" stroke-width="1"/>
<line x1="14" y1="497.5" x2="19" y2="497.5" stroke="#000" stroke-width="1"/>
<line x1="14" y1="502.5" x2="19" y2="502.5" stroke="#000" stroke-width="1"/>
<line x1="14" y1="507.5" x2="19" y2="507.5" stroke="#000" stroke-width="1"/>
<line x1="14" y1="512.5" x2="19" y2="512.5" stroke="#000" stroke-width="1"/>
<line x1="14" y1="517.5" x2="19" y2="517.5" stroke="#000" stroke-width="1"/>
<line x1="14" y1="522.5" x2="19" y2="522.5" stroke="#000" stroke-width="1"/>
<line x1="14" y1="527.5" x2="19" y2="527.5" stroke="#000" stroke-width="1"/>
<line x1="14" y1="533.5" x2="19" y2="533.5" stroke="#000" stroke-width="1"/>
<line x1="14" y1="538.5" x2="19" y2="538.5" stroke="#000" stroke-width="1"/>
<line x1="3" y1="543.5" x2="19" y2="543.5" stroke="#000" stroke-width="1"/>
<text x="0" y="0" font-size="10" fill="#000" textLength="18.6" lengthAdjust="spacingAndGlyphs" transform="translate(4.4,112.79999999999998) rotate(90)" text-anchor="start">18.0</text>
<text x="0" y="0" font-size="10" fill="#000" textLength="18.6" lengthAdjust="spacingAndGlyphs" transform="translate(4.4,163.99999999999997) rotate(90)" text-anchor="start">16.0</text>
<text x="0" y="0" font-size="10" fill="#000" textLength="18.6" lengthAdjust="spacingAndGlyphs" transform="translate(4.4,215.2) rotate(90)" text-anchor="start">14.0</text>
<text x="0" y="0" font-size="10" fill="#000" textLength="18.6" lengthAdjust="spacingAndGlyphs" transform="translate(4.4,266.4) rotate(90)" text-anchor="start">12.0</text>
<text x="0" y="0" font-size="10" fill="#000" textLength="18.6" lengthAdjust="spacingAndGlyphs" transform="translate(4.4,317.59999999999997) rotate(90)" text-anchor="start">10.0</text>
<text x="0" y="0" font-size="10" fill="#000" textLength="13.5" lengthAdjust="spacingAndGlyphs" transform="translate(4.4,373.9) rotate(90)" text-anchor="start">8.0</text>
<text x="0" y="0" font-size="10" fill="#000" textLength="13.5" lengthAdjust="spacingAndGlyphs" transform="translate(4.4,425.1) rotate(90)" text-anchor="start">6.0</text>
<text x="0" y="0" font-size="10" fill="#000" textLength="13.5" lengthAdjust="spacingAndGlyphs" transform="translate(4.4,476.3) rotate(90)" text-anchor="start">4.0</text>
<text x="0" y="0" font-size="10" fill="#000" textLength="13.5" lengthAdjust="spacingAndGlyphs" transform="translate(4.4,527.5) rotate(90)" text-anchor="start">2.0</text>
<line x1="25.5" y1="546" x2="25.5" y2="552" stroke="#000" stroke-width="1"/>
<line x1="31.5" y1="546" x2="31.5" y2="552" stroke="#000" stroke-width="1"/>
<line x1="38.5" y1="546" x2="38.5" y2="552" stroke="#000" stroke-width="1"/>
<line x1="44.5" y1="546" x2="44.5" y2="552" stroke="#000" stroke-width="1"/>
<line x1="50.5" y1="546" x2="50.5" y2="552" stroke="#000" stroke-width="1"/>
<line x1="56.5" y1="546" x2="56.5" y2="562" stroke="#000" stroke-width="1"/>
<line x1="63.5" y1="546" x2="63.5" y2="552" stroke="#000" stroke-width="1"/>
<line x1="69.5" y1="546" x2="69.5" y2="552" stroke="#000" stroke-width="1"/>
<line x1="75.5" y1="546" x2="75.5" y2="552" stroke="#000" stroke-width="1"/>
<line x1="82.5" y1="546" x2="82.5" y2="552" stroke="#000" stroke-width="1"/>
<line x1="88.5" y1="546" x2="88.5" y2="552" stroke="#000" stroke-width="1"/>
<line x1="94.5" y1="546" x2="94.5" y2="552" stroke="#000" stroke-width="1"/>
<line x1="101.5" y1="546" x2="101.5" y2="552" stroke="#000" stroke-width="1"/>
<line x1="107.5" y1="546" x2="107.5" y2="552" stroke="#000" stroke-width="1"/>
<line x1="113.5" y1="546" x2="113.5" y2="552" stroke="#000" stroke-width="1"/>
<line x1="119.5" y1="546" x2="119.5" y2="562" stroke="#000" stroke-width="1"/>
<line x1="126.5" y1="546" x2="126.5" y2="552" stroke="#000" stroke-width="1"/>
<line x1="132.5" y1="546" x2="132.5" y2="552" stroke="#000" stroke-width="1"/>
<line x1="138.5" y1="546" x2="138.5" y2="552" stroke="#000" stroke-width="1"/>
<line x1="145.5" y1="546" x2="145.5" y2="552" stroke="#000" stroke-width="1"/>
<line x1="151.5" y1="546" x2="151.5" y2="552" stroke="#000" stroke-width="1"/>
<line x1="157.5" y1="546" x2="157.5" y2="552" stroke="#000" stroke-width="1"/>
<line x1="163.5" y1="546" x2="163.5" y2="552" stroke="#000" stroke-width="1"/>
<line x1="170.5" y1="546" x2="170.5" y2="552" stroke="#000" stroke-width="1"/>
<line x1="176.5" y1="546" x2="176.5" y2="552" stroke="#000" stroke-width="1"/>
<line x1="182.5" y1="546" x2="182.5" y2="562" stroke="#000" stroke-width="1"/>
<line x1="189.5" y1="546" x2="189.5" y2="552" stroke="#000" stroke-width="1"/>
<line x1="195.5" y1="546" x2="195.5" y2="552" stroke="#000" stroke-width="1"/>
<line x1="201.5" y1="546" x2="201.5" y2="552" stroke="#000" stroke-width="1"/>
<line x1="208.5" y1="546" x2="208.5" y2="552" stroke="#000" stroke-width="1"/>
<line x1="214.5" y1="546" x2="214.5" y2="552" stroke="#000" stroke-width="1"/>
<line x1="220.5" y1="546" x2="220.5" y2="552" stroke="#000" stroke-width="1"/>
<line x1="226.5" y1="546" x2="226.5" y2="552" stroke="#000" stroke-width="1"/>
<line x1="233.5" y1="546" x2="233.5" y2="552" stroke="#000" stroke-width="1"/>
<line x1="239.5" y1="546" x2="239.5" y2="552" stroke="#000" stroke-width="1"/>
<line x1="245.5" y1="546" x2="245.5" y2="562" stroke="#000" stroke-width="1"/>
<line x1="252.5" y1="546" x2="252.5" y2="552" stroke="#000" stroke-width="1"/>
<line x1="258.5" y1="546" x2="258.5" y2="552" stroke="#000" stroke-width="1"/>
<line x1="264.5" y1="546" x2="264.5" y2="552" stroke="#000" stroke-width="1"/>
<line x1="270.5" y1="546" x2="270.5" y2="552" stroke="#000" stroke-width="1"/>
<line x1="277.5" y1="546" x2="277.5" y2="552" stroke="#000" stroke-width="1"/>
<line x1="283.5" y1="546" x2="283.5" y2="552" stroke="#000" stroke-width="1"/>
<line x1="289.5" y1="546" x2="289.5" y2="552" stroke="#000" stroke-width="1"/>
<line x1="296.5" y1="546" x2="296.5" y2="552" stroke="#000" stroke-width="1"/>
<line x1="302.5" y1="546" x2="302.5" y2="552" stroke="#000" stroke-width="1"/>
<line x1="308.5" y1="546" x2="308.5" y2="562" stroke="#000" stroke-width="1"/>
<line x1="315.5" y1="546" x2="315.5" y2="552" stroke="#000" stroke-width="1"/>
<line x1="321.5" y1="546" x2="321.5" y2="552" stroke="#000" stroke-width="1"/>
<line x1="327.5" y1="546" x2="327.5" y2="552" stroke="#000" stroke-width="1"/>
<line x1="333.5" y1="546" x2="333.5" y2="552" stroke="#000" stroke-width="1"/>
<line x1="340.5" y1="546" x2="340.5" y2="552" stroke="#000" stroke-width="1"/>
<line x1="346.5" y1="546" x2="346.5" y2="552" stroke="#000" stroke-width="1"/>
<line x1="352.5" y1="546" x2="352.5" y2="552" stroke="#000" stroke-width="1"/>
<line x1="359.5" y1="546" x2="359.5" y2="552" stroke="#000" stroke-width="1"/>
<line x1="365.5" y1="546" x2="365.5" y2="552" stroke="#000" stroke-width="1"/>
<line x1="371.5" y1="546" x2="371.5" y2="562" stroke="#000" stroke-width="1"/>
<line x1="377.5" y1="546" x2="377.5" y2="552" stroke="#000" stroke-width="1"/>
<line x1="384.5" y1="546" x2="384.5" y2="552" stroke="#000" stroke-width="1"/>
<line x1="390.5" y1="546" x2="390.5" y2="552" stroke="#000" stroke-width="1"/>
<line x1="396.5" y1="546" x2="396.5" y2="552" stroke="#000" stroke-width="1"/>
<line x1="403.5" y1="546" x2="403.5" y2="552" stroke="#000" stroke-width="1"/>
<line x1="409.5" y1="546" x2="409.5" y2="552" stroke="#000" stroke-width="1"/>
<line x1="415.5" y1="546" x2="415.5" y2="552" stroke="#000" stroke-width="1"/>
<line x1="422.5" y1="546" x2="422.5" y2="552" stroke="#000" stroke-width="1"/>
<line x1="428.5" y1="546" x2="428.5" y2="552" stroke="#000" stroke-width="1"/>
<line x1="434.5" y1="546" x2="434.5" y2="562" stroke="#000" stroke-width="1"/>
<line x1="440.5" y1="546" x2="440.5" y2="552" stroke="#000" stroke-width="1"/>
<line x1="447.5" y1="546" x2="447.5" y2="552" stroke="#000" stroke-width="1"/>
<line x1="453.5" y1="546" x2="453.5" y2="552" stroke="#000" stroke-width="1"/>
<line x1="459.5" y1="546" x2="459.5" y2="552" stroke="#000" stroke-width="1"/>
<line x1="466.5" y1="546" x2="466.5" y2="552" stroke="#000" stroke-width="1"/>
<line x1="472.5" y1="546" x2="472.5" y2="552" stroke="#000" stroke-width="1"/>
<line x1="478.5" y1="546" x2="478.5" y2="552" stroke="#000" stroke-width="1"/>
<line x1="485.5" y1="546" x2="485.5" y2="552" stroke="#000" stroke-width="1"/>
<line x1="491.5" y1="546" x2="491.5" y2="552" stroke="#000" stroke-width="1"/>
<line x1="497.5" y1="546" x2="497.5" y2="562" stroke="#000" stroke-width="1"/>
<line x1="503.5" y1="546" x2="503.5" y2="552" stroke="#000" stroke-width="1"/>
<line x1="510.5" y1="546" x2="510.5" y2="552" stroke="#000" stroke-width="1"/>
<line x1="516.5" y1="546" x2="516.5" y2="552" stroke="#000" stroke-width="1"/>
<line x1="522.5" y1="546" x2="522.5" y2="552" stroke="#000" stroke-width="1"/>
<line x1="529.5" y1="546" x2="529.5" y2="552" stroke="#000" stroke-width="1"/>
<line x1="535.5" y1="546" x2="535.5" y2="552" stroke="#000" stroke-width="1"/>
<line x1="541.5" y1="546" x2="541.5" y2="552" stroke="#000" stroke-width="1"/>
<line x1="547.5" y1="546" x2="547.5" y2="552" stroke="#000" stroke-width="1"/>
<line x1="554.5" y1="546" x2="554.5" y2="552" stroke="#000" stroke-width="1"/>
<line x1="560.5" y1="546" x2="560.5" y2="562" stroke="#000" stroke-width="1"/>
<line x1="566.5" y1="546" x2="566.5" y2="552" stroke="#000" stroke-width="1"/>
<line x1="573.5" y1="546" x2="573.5" y2="552" stroke="#000" stroke-width="1"/>
<line x1="579.5" y1="546" x2="579.5" y2="552" stroke="#000" stroke-width="1"/>
<line x1="585.5" y1="546" x2="585.5" y2="552" stroke="#000" stroke-width="1"/>
<line x1="592.5" y1="546" x2="592.5" y2="552" stroke="#000" stroke-width="1"/>
<line x1="598.5" y1="546" x2="598.5" y2="552" stroke="#000" stroke-width="1"/>
<line x1="604.5" y1="546" x2="604.5" y2="552" stroke="#000" stroke-width="1"/>
<line x1="610.5" y1="546" x2="610.5" y2="552" stroke="#000" stroke-width="1"/>
<line x1="617.5" y1="546" x2="617.5" y2="552" stroke="#000" stroke-width="1"/>
<line x1="623.5" y1="546" x2="623.5" y2="562" stroke="#000" stroke-width="1"/>
<line x1="629.5" y1="546" x2="629.5" y2="552" stroke="#000" stroke-width="1"/>
<line x1="636.5" y1="546" x2="636.5" y2="552" stroke="#000" stroke-width="1"/>
<line x1="642.5" y1="546" x2="642.5" y2="552" stroke="#000" stroke-width="1"/>
<line x1="648.5" y1="546" x2="648.5" y2="552" stroke="#000" stroke-width="1"/>
<line x1="654.5" y1="546" x2="654.5" y2="552" stroke="#000" stroke-width="1"/>
<line x1="661.5" y1="546" x2="661.5" y2="552" stroke="#000" stroke-width="1"/>
<line x1="667.5" y1="546" x2="667.5" y2="552" stroke="#000" stroke-width="1"/>
<line x1="673.5" y1="546" x2="673.5" y2="552" stroke="#000" stroke-width="1"/>
<line x1="680.5" y1="546" x2="680.5" y2="552" stroke="#000" stroke-width="1"/>
<line x1="686.5" y1="546" x2="686.5" y2="562" stroke="#000" stroke-width="1"/>
<line x1="692.5" y1="546" x2="692.5" y2="552" stroke="#000" stroke-width="1"/>
<line x1="699.5" y1="546" x2="699.5" y2="552" stroke="#000" stroke-width="1"/>
<line x1="705.5" y1="546" x2="705.5" y2="552" stroke="#000" stroke-width="1"/>
<line x1="711.5" y1="546" x2="711.5" y2="552" stroke="#000" stroke-width="1"/>
<line x1="717.5" y1="546" x2="717.5" y2="552" stroke="#000" stroke-width="1"/>
<line x1="724.5" y1="546" x2="724.5" y2="552" stroke="#000" stroke-width="1"/>
<line x1="730.5" y1="546" x2="730.5" y2="552" stroke="#000" stroke-width="1"/>
<line x1="736.5" y1="546" x2="736.5" y2="552" stroke="#000" stroke-width="1"/>
<line x1="743.5" y1="546" x2="743.5" y2="552" stroke="#000" stroke-width="1"/>
<line x1="749.5" y1="546" x2="749.5" y2="562" stroke="#000" stroke-width="1"/>
<line x1="755.5" y1="546" x2="755.5" y2="552" stroke="#000" stroke-width="1"/>
<line x1="761.5" y1="546" x2="761.5" y2="552" stroke="#000" stroke-width="1"/>
<line x1="768.5" y1="546" x2="768.5" y2="552" stroke="#000" stroke-width="1"/>
<line x1="774.5" y1="546" x2="774.5" y2="552" stroke="#000" stroke-width="1"/>
<line x1="780.5" y1="546" x2="780.5" y2="552" stroke="#000" stroke-width="1"/>
<text x="57.95" y="561" font-size="10" fill="#000" textLength="14" lengthAdjust="spacingAndGlyphs">4.0</text>
<text x="120.9" y="561" font-size="10" fill="#000" textLength="14" lengthAdjust="spacingAndGlyphs">6.0</text>
<text x="183.85000000000002" y="561" font-size="10" fill="#000" textLength="14" lengthAdjust="spacingAndGlyphs">8.0</text>
<text x="246.8" y="561" font-size="10" fill="#000" textLength="19" lengthAdjust="spacingAndGlyphs">10.0</text>
<text x="309.75" y="561" font-size="10" fill="#000" textLength="19" lengthAdjust="spacingAndGlyphs">12.0</text>
<text x="372.7" y="561" font-size="10" fill="#000" textLength="19" lengthAdjust="spacingAndGlyphs">14.0</text>
<text x="435.65000000000003" y="561" font-size="10" fill="#000" textLength="19" lengthAdjust="spacingAndGlyphs">16.0</text>
<text x="498.6" y="561" font-size="10" fill="#000" textLength="19" lengthAdjust="spacingAndGlyphs">18.0</text>
<text x="561.5500000000001" y="561" font-size="10" fill="#000" textLength="19" lengthAdjust="spacingAndGlyphs">20.0</text>
<text x="624.5000000000001" y="561" font-size="10" fill="#000" textLength="19" lengthAdjust="spacingAndGlyphs">22.0</text>
<text x="687.45" y="561" font-size="10" fill="#000" textLength="19" lengthAdjust="spacingAndGlyphs">24.0</text>
<text x="750.4000000000001" y="561" font-size="10" fill="#000" textLength="19" lengthAdjust="spacingAndGlyphs">26.0</text>
<line x1="3" y1="372.5" x2="19" y2="372.5" stroke="#000" stroke-width="1" stroke-dasharray="1 1" shape-rendering="crispEdges"/>
<line x1="341.5" y1="546" x2="341.5" y2="562" stroke="#000" stroke-width="1" stroke-dasharray="1 1" shape-rendering="crispEdges"/>
<rect x="3" y="546" width="16" height="16" fill="#f0f0f0"/>
<rect x="6" y="569" width="131" height="18" fill="#f0f0f0"/>
<line x1="6" y1="569.5" x2="137" y2="569.5" stroke="#8a8a8a" stroke-width="1"/>
<line x1="6.5" y1="569" x2="6.5" y2="587" stroke="#8a8a8a" stroke-width="1"/>
<line x1="7" y1="570.5" x2="136" y2="570.5" stroke="#a8a8a8" stroke-width="1"/>
<line x1="7.5" y1="570" x2="7.5" y2="586" stroke="#a8a8a8" stroke-width="1"/>
<line x1="6" y1="586.5" x2="137" y2="586.5" stroke="#ffffff" stroke-width="1"/>
<line x1="136.5" y1="569" x2="136.5" y2="587" stroke="#ffffff" stroke-width="1"/>
<text x="10.3" y="582.3" font-size="11" fill="#000" textLength="117.6" lengthAdjust="spacingAndGlyphs">Position: (12.950,8.640)</text>
<rect x="142" y="569" width="80" height="18" fill="#f0f0f0"/>
<line x1="142" y1="569.5" x2="222" y2="569.5" stroke="#8a8a8a" stroke-width="1"/>
<line x1="142.5" y1="569" x2="142.5" y2="587" stroke="#8a8a8a" stroke-width="1"/>
<line x1="143" y1="570.5" x2="221" y2="570.5" stroke="#a8a8a8" stroke-width="1"/>
<line x1="143.5" y1="570" x2="143.5" y2="586" stroke="#a8a8a8" stroke-width="1"/>
<line x1="142" y1="586.5" x2="222" y2="586.5" stroke="#ffffff" stroke-width="1"/>
<line x1="221.5" y1="569" x2="221.5" y2="587" stroke="#ffffff" stroke-width="1"/>
<text x="146.5" y="582.3" font-size="11" fill="#000" textLength="67" lengthAdjust="spacingAndGlyphs">Value: 2.9806</text>
<rect x="580" y="569" width="66" height="18" fill="#f0f0f0"/>
<line x1="580" y1="569.5" x2="646" y2="569.5" stroke="#8a8a8a" stroke-width="1"/>
<line x1="580.5" y1="569" x2="580.5" y2="587" stroke="#8a8a8a" stroke-width="1"/>
<line x1="581" y1="570.5" x2="645" y2="570.5" stroke="#a8a8a8" stroke-width="1"/>
<line x1="581.5" y1="570" x2="581.5" y2="586" stroke="#a8a8a8" stroke-width="1"/>
<line x1="580" y1="586.5" x2="646" y2="586.5" stroke="#ffffff" stroke-width="1"/>
<line x1="645.5" y1="569" x2="645.5" y2="587" stroke="#ffffff" stroke-width="1"/>
<text x="584.4" y="582.3" font-size="11" fill="#000" textLength="52.6" lengthAdjust="spacingAndGlyphs">State: Blob</text>
<rect x="651" y="569" width="128" height="18" fill="#f0f0f0"/>
<line x1="651" y1="569.5" x2="779" y2="569.5" stroke="#8a8a8a" stroke-width="1"/>
<line x1="651.5" y1="569" x2="651.5" y2="587" stroke="#8a8a8a" stroke-width="1"/>
<line x1="652" y1="570.5" x2="778" y2="570.5" stroke="#a8a8a8" stroke-width="1"/>
<line x1="652.5" y1="570" x2="652.5" y2="586" stroke="#a8a8a8" stroke-width="1"/>
<line x1="651" y1="586.5" x2="779" y2="586.5" stroke="#ffffff" stroke-width="1"/>
<line x1="778.5" y1="569" x2="778.5" y2="587" stroke="#ffffff" stroke-width="1"/>
<text x="655.7" y="582.3" font-size="11" fill="#000" textLength="114.8" lengthAdjust="spacingAndGlyphs">Substate: Select Blob(s)</text>
<rect x="45" y="99" width="696" height="400" fill="#000" opacity="0.2" filter="url(#shadow)"/>
<rect x="50" y="100" width="686" height="392" fill="#f0f0f0"/>
<rect x="50" y="100" width="686" height="31" fill="#0b4a6b"/>
<rect x="50.5" y="100.5" width="685" height="391" fill="none" stroke="#0b4a6b" stroke-width="1"/>
<rect x="59" y="107" width="16" height="16" rx="2" fill="url(#appicon)"/>
<circle cx="66.8" cy="115" r="4.8" fill="none" stroke="#ffffff" stroke-width="1" opacity="0.9"/>
<circle cx="66.8" cy="115" r="3.2" fill="none" stroke="#ffffff" stroke-width="1" opacity="0.9"/>
<circle cx="66.8" cy="115" r="1.6" fill="#fff"/>
<text x="80.6" y="119.8" font-size="12" fill="#ffffff" textLength="79" lengthAdjust="spacingAndGlyphs">Blob Properties</text>
<line x1="715" y1="110" x2="725" y2="120" stroke="#ffffff" stroke-width="1.1"/>
<line x1="725" y1="110" x2="715" y2="120" stroke="#ffffff" stroke-width="1.1"/>
<rect x="53.5" y="137.5" width="357" height="219" fill="none" stroke="#dcdcdc" stroke-width="1"/>
<rect x="57" y="136" width="34.6" height="3" fill="#f0f0f0"/>
<text x="59" y="142" font-size="11" fill="#000" textLength="30.6" lengthAdjust="spacingAndGlyphs">Labels</text>
<text x="56.8" y="160.8" font-size="11" fill="#000" textLength="80.5" lengthAdjust="spacingAndGlyphs">Compound Name</text>
<text x="56.8" y="185.8" font-size="11" fill="#000" textLength="86.4" lengthAdjust="spacingAndGlyphs">Compound Library</text>
<text x="56.8" y="210.8" font-size="11" fill="#000" textLength="58.2" lengthAdjust="spacingAndGlyphs">Group Name</text>
<text x="56.8" y="235.8" font-size="11" fill="#000" textLength="91.2" lengthAdjust="spacingAndGlyphs">Constellation Name</text>
<rect x="177.5" y="147.5" width="229" height="19" fill="#ffffff" stroke="#a0a0a0" stroke-width="1"/>
<text x="180.2" y="160.8" font-size="11" fill="#000" textLength="105" lengthAdjust="spacingAndGlyphs">5-hydroxy-tryptamine</text>
<rect x="177.5" y="172.5" width="229" height="19" fill="#dedede" stroke="#bcbcbc" stroke-width="1"/>
<path d="M392.5,181 l4.5,4.5 l4.5,-4.5" fill="none" stroke="#505050" stroke-width="1.1"/>
<rect x="177.5" y="197.5" width="229" height="19" fill="#ffffff" stroke="#a0a0a0" stroke-width="1"/>
<rect x="177.5" y="222.5" width="229" height="19" fill="#ffffff" stroke="#a0a0a0" stroke-width="1"/>
<text x="56.9" y="257.9" font-size="11" fill="#000" textLength="106.2" lengthAdjust="spacingAndGlyphs">Compound Description</text>
<rect x="57.5" y="264.5" width="349" height="70" fill="#ffffff" stroke="#a0a0a0" stroke-width="1"/>
<rect x="61.5" y="339.5" width="12" height="12" fill="#ffffff" stroke="#333333" stroke-width="1"/>
<text x="77.8" y="348.5" font-size="11" fill="#000" textLength="37.5" lengthAdjust="spacingAndGlyphs">Auto Fill</text>
<rect x="53.5" y="371.5" width="357" height="81" fill="none" stroke="#dcdcdc" stroke-width="1"/>
<rect x="57.2" y="370" width="29" height="3" fill="#f0f0f0"/>
<text x="59.2" y="376" font-size="11" fill="#000" textLength="25" lengthAdjust="spacingAndGlyphs">Flags</text>
<rect x="61.5" y="386.5" width="12" height="12" fill="#ffffff" stroke="#333333" stroke-width="1"/>
<path d="M63.5,392.5 l3,3 l5.5,-6" fill="none" stroke="#222" stroke-width="1.2"/>
<text x="78" y="396.2" font-size="11" fill="#000" textLength="33.8" lengthAdjust="spacingAndGlyphs">Include</text>
<rect x="61.5" y="409.5" width="12" height="12" fill="#ffffff" stroke="#333333" stroke-width="1"/>
<path d="M63.5,415.5 l3,3 l5.5,-6" fill="none" stroke="#222" stroke-width="1.2"/>
<text x="78" y="419.2" font-size="11" fill="#000" textLength="84.2" lengthAdjust="spacingAndGlyphs">Internal Standard</text>
<rect x="78.5" y="408.5" width="84" height="13" fill="none" stroke="#000" stroke-width="1" stroke-dasharray="1 1" shape-rendering="crispEdges"/>
<rect x="61.5" y="432.5" width="12" height="12" fill="#ffffff" stroke="#333333" stroke-width="1"/>
<text x="78" y="442.2" font-size="11" fill="#000" textLength="36" lengthAdjust="spacingAndGlyphs">Exclude</text>
<rect x="236.5" y="386.5" width="12" height="12" fill="#ffffff" stroke="#333333" stroke-width="1"/>
<path d="M238.5,392.5 l3,3 l5.5,-6" fill="none" stroke="#222" stroke-width="1.2"/>
<text x="252.8" y="396.2" font-size="11" fill="#000" textLength="78.6" lengthAdjust="spacingAndGlyphs">Add Text Object</text>
<rect x="236.5" y="409.5" width="12" height="12" fill="#ffffff" stroke="#333333" stroke-width="1"/>
<text x="252.8" y="419.2" font-size="11" fill="#000" textLength="111.2" lengthAdjust="spacingAndGlyphs">Add Chemical Structure</text>
<rect x="236.5" y="432.5" width="12" height="12" fill="#ffffff" stroke="#333333" stroke-width="1"/>
<text x="252.8" y="442.2" font-size="11" fill="#000" textLength="42.8" lengthAdjust="spacingAndGlyphs">Set Color</text>
<rect x="304.5" y="432.5" width="12" height="12" fill="#ffc000" stroke="#a0a0a0" stroke-width="1"/>
<line x1="304.5" y1="432.5" x2="316.5" y2="432.5" stroke="#808080" stroke-width="1"/>
<line x1="304.5" y1="432.5" x2="304.5" y2="444.5" stroke="#808080" stroke-width="1"/>
<text x="319.8" y="442.2" font-size="11" fill="#000" textLength="62.2" lengthAdjust="spacingAndGlyphs">Default Color</text>
<rect x="518.5" y="135.5" width="126" height="17" fill="#f0f0f0" stroke="#d9d9d9" stroke-width="1"/>
<rect x="469.5" y="135.5" width="49" height="17" fill="#f0f0f0" stroke="#d9d9d9" stroke-width="1"/>
<rect x="413" y="152" width="320" height="303" fill="#ffffff"/>
<rect x="413.5" y="152.5" width="319" height="302" fill="#ffffff" stroke="#e3e3e3" stroke-width="1"/>
<rect x="413.5" y="132.5" width="56" height="20" fill="#ffffff" stroke="#d9d9d9" stroke-width="1"/>
<rect x="414" y="151" width="55" height="3" fill="#ffffff"/>
<text x="420.6" y="146" font-size="11" fill="#000" textLength="43" lengthAdjust="spacingAndGlyphs">Statistics</text>
<text x="474.5" y="147.8" font-size="11" fill="#000" textLength="38.5" lengthAdjust="spacingAndGlyphs">Analysis</text>
<text x="524" y="147.8" font-size="11" fill="#000" textLength="116.2" lengthAdjust="spacingAndGlyphs">Qualifier/Quantifier Ions</text>
<rect x="415" y="156" width="317" height="298" fill="#f0f0f0"/>
<rect x="416" y="157" width="315" height="138" fill="#ffffff"/>
<line x1="415.5" y1="156" x2="415.5" y2="454" stroke="#6d7078" stroke-width="1"/>
<line x1="415" y1="156.5" x2="732" y2="156.5" stroke="#6d7078" stroke-width="1"/>
<line x1="731.5" y1="156" x2="731.5" y2="454" stroke="#7a7a7a" stroke-width="1"/>
<line x1="415" y1="453.5" x2="732" y2="453.5" stroke="#7a7a7a" stroke-width="1"/>
<line x1="732.5" y1="156" x2="732.5" y2="455" stroke="#ffffff" stroke-width="1"/>
<line x1="415" y1="454.5" x2="733" y2="454.5" stroke="#ffffff" stroke-width="1"/>
<line x1="416" y1="166.5" x2="731" y2="166.5" stroke="#ececec" stroke-width="1"/>
<line x1="573.5" y1="157" x2="573.5" y2="167" stroke="#e8e8e8" stroke-width="1"/>
<line x1="573.5" y1="167" x2="573.5" y2="296" stroke="#7a7a7a" stroke-width="1"/>
<line x1="416" y1="183.5" x2="731" y2="183.5" stroke="#7a7a7a" stroke-width="1"/>
<line x1="416" y1="199.5" x2="731" y2="199.5" stroke="#7a7a7a" stroke-width="1"/>
<line x1="416" y1="215.5" x2="731" y2="215.5" stroke="#7a7a7a" stroke-width="1"/>
<line x1="416" y1="231.5" x2="731" y2="231.5" stroke="#7a7a7a" stroke-width="1"/>
<line x1="416" y1="247.5" x2="731" y2="247.5" stroke="#7a7a7a" stroke-width="1"/>
<line x1="416" y1="263.5" x2="731" y2="263.5" stroke="#7a7a7a" stroke-width="1"/>
<line x1="416" y1="279.5" x2="731" y2="279.5" stroke="#7a7a7a" stroke-width="1"/>
<line x1="416" y1="295.5" x2="731" y2="295.5" stroke="#7a7a7a" stroke-width="1"/>
<text x="416.5" y="178.6" font-size="10.5" fill="#000" textLength="33.4" lengthAdjust="spacingAndGlyphs">Blob ID</text>
<text x="575.3" y="178.6" font-size="10.5" fill="#000" textLength="11" lengthAdjust="spacingAndGlyphs">20</text>
<text x="416.5" y="194.6" font-size="10.5" fill="#000" textLength="22.5" lengthAdjust="spacingAndGlyphs">Area</text>
<text x="575.3" y="194.6" font-size="10.5" fill="#000" textLength="17.5" lengthAdjust="spacingAndGlyphs">175</text>
<text x="416.5" y="210.6" font-size="10.5" fill="#000" textLength="33.4" lengthAdjust="spacingAndGlyphs">Volume</text>
<text x="575.3" y="210.6" font-size="10.5" fill="#000" textLength="51.7" lengthAdjust="spacingAndGlyphs">1910.4217</text>
<text x="416.5" y="226.6" font-size="10.5" fill="#000" textLength="51.5" lengthAdjust="spacingAndGlyphs">Peak Value</text>
<text x="575.3" y="226.6" font-size="10.5" fill="#000" textLength="39.4" lengthAdjust="spacingAndGlyphs">75.9964</text>
<text x="416.5" y="242.6" font-size="10.5" fill="#000" textLength="41.5" lengthAdjust="spacingAndGlyphs">Column I</text>
<text x="575.3" y="242.6" font-size="10.5" fill="#000" textLength="39.1" lengthAdjust="spacingAndGlyphs">12.9505</text>
<text x="416.5" y="258.6" font-size="10.5" fill="#000" textLength="45.4" lengthAdjust="spacingAndGlyphs">Column II</text>
<text x="575.3" y="258.6" font-size="10.5" fill="#000" textLength="32.5" lengthAdjust="spacingAndGlyphs">9.1200</text>
<text x="416.5" y="274.6" font-size="10.5" fill="#000" textLength="84.5" lengthAdjust="spacingAndGlyphs">Internal Standard</text>
<text x="575.3" y="274.6" font-size="10.5" fill="#000" textLength="5.2" lengthAdjust="spacingAndGlyphs">0</text>
<text x="416.5" y="290.6" font-size="10.5" fill="#000" textLength="61.4" lengthAdjust="spacingAndGlyphs">Volume Ratio</text>
<text x="575.3" y="290.6" font-size="10.5" fill="#000" textLength="3.5" lengthAdjust="spacingAndGlyphs">-</text>
<rect x="57.5" y="463.5" width="84" height="22" fill="#cccccc" stroke="#bfbfbf" stroke-width="1"/>
<text x="83.25" y="477.8" font-size="11" fill="#838383" textLength="32.5" lengthAdjust="spacingAndGlyphs">Hit List</text>
<rect x="411.5" y="463.5" width="137" height="22" fill="#cccccc" stroke="#bfbfbf" stroke-width="1"/>
<text x="426.0" y="477.8" font-size="11" fill="#838383" textLength="108" lengthAdjust="spacingAndGlyphs">OK and View Spectrum</text>
<rect x="557.5" y="463.5" width="78" height="22" fill="#e1e1e1" stroke="#adadad" stroke-width="1"/>
<text x="589.25" y="477.8" font-size="11" fill="#000" textLength="14.5" lengthAdjust="spacingAndGlyphs">OK</text>
<rect x="644.5" y="463.5" width="84" height="22" fill="#e1e1e1" stroke="#adadad" stroke-width="1"/>
<text x="670.0" y="477.8" font-size="11" fill="#000" textLength="33" lengthAdjust="spacingAndGlyphs">Cancel</text>
</svg></body></html>
